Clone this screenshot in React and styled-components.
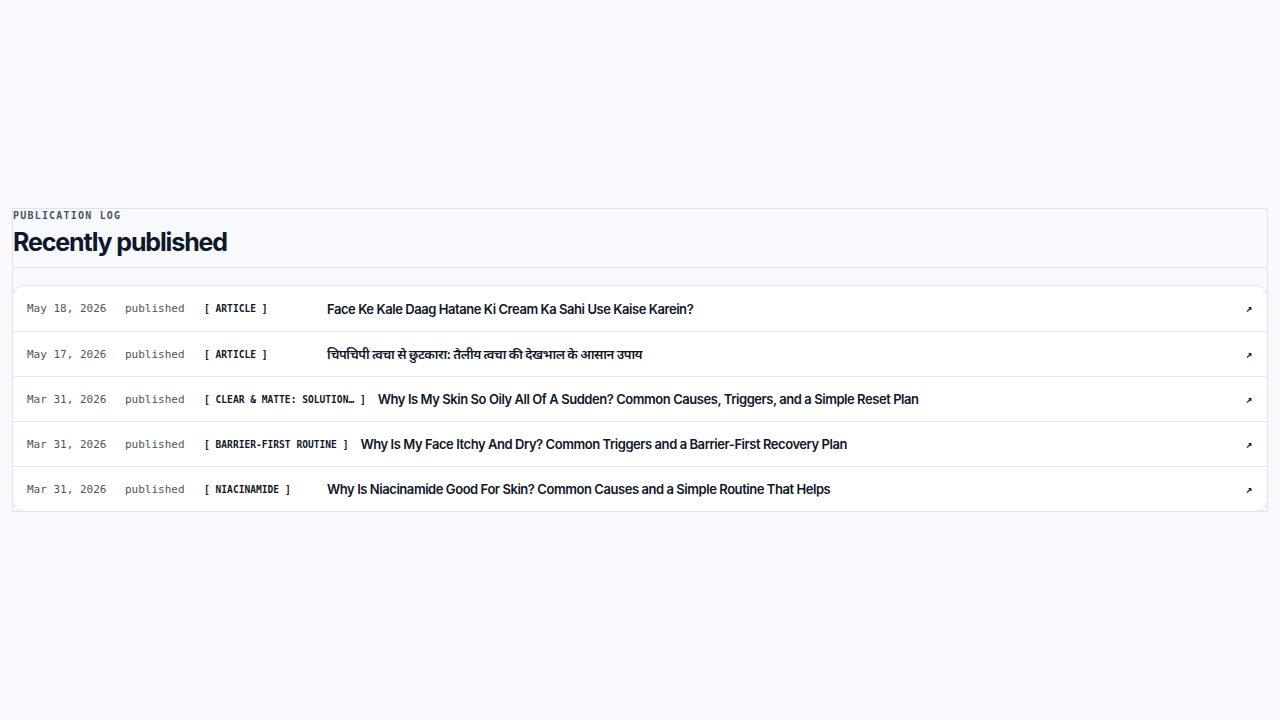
import styled, { createGlobalStyle } from "styled-components";

const GlobalStyle = createGlobalStyle`
  * { box-sizing: border-box; }
  body {
    margin: 0;
    background: #f7f9fc;
    font-family: Inter, "Noto Sans", "Noto Sans Devanagari", sans-serif;
    color: #0f172a;
  }
`;

const Page = styled.main`
  min-height: 100vh;
  display: flex;
  flex-direction: column;
  justify-content: center;
  padding: 0 12px;
`;

const Log = styled.section`
  border: 1px solid #dfe4ea;
`;

const Header = styled.header`
  border-bottom: 1px solid #dfe4ea;
  padding-bottom: 7px;
`;

const Eyebrow = styled.div`
  font-family: "DejaVu Sans Mono", "Liberation Mono", monospace;
  font-size: 10px;
  font-weight: 700;
  letter-spacing: 0.12em;
  color: #475569;
  line-height: 13px;
`;

const Title = styled.h2`
  margin: 2px 0 0;
  font-family: Inter, sans-serif;
  font-size: 25px;
  font-weight: 700;
  letter-spacing: -0.045em;
  line-height: 36px;
  color: #0f172a;
`;

const List = styled.ol`
  list-style: none;
  margin: 17px -1px -1px;
  padding: 0;
  background: #fff;
  border: 1px solid #dfe4ea;
  border-radius: 12px;
  overflow: hidden;
`;

const Row = styled.li`
  display: flex;
  align-items: center;
  height: 45px;
  padding: 0 14px;
  gap: 12px;
  & + & {
    border-top: 1px solid #e4e8ed;
  }
`;

const Mono = styled.span`
  font-family: "DejaVu Sans Mono", "Liberation Mono", monospace;
  font-size: 11px;
  color: #4b5563;
  width: ${(p) => p.$w}px;
  flex: none;
`;

const Tag = styled.span`
  font-family: "DejaVu Sans Mono", "Liberation Mono", monospace;
  font-size: 9.6px;
  font-weight: 700;
  color: #111827;
  min-width: 111px;
  flex: none;
  white-space: nowrap;
`;

const Headline = styled.a`
  flex: 1;
  font-family: Inter, "Noto Sans", "Noto Sans Devanagari", sans-serif;
  font-size: 13px;
  font-weight: 600;
  letter-spacing: -0.034em;
  color: #0f172a;
  text-decoration: none;
  white-space: nowrap;
  overflow: hidden;
  text-overflow: ellipsis;
`;

const Arrow = styled.span`
  font-family: "DejaVu Sans Mono", monospace;
  font-size: 11px;
  font-weight: 700;
  color: #111827;
  flex: none;
  margin-right: 1px;
`;

const posts = [
  { date: "May 18, 2026", tag: "ARTICLE", title: "Face Ke Kale Daag Hatane Ki Cream Ka Sahi Use Kaise Karein?" },
  { date: "May 17, 2026", tag: "ARTICLE", title: "चिपचिपी त्वचा से छुटकारा: तैलीय त्वचा की देखभाल के आसान उपाय" },
  { date: "Mar 31, 2026", tag: "CLEAR & MATTE: SOLUTION…", title: "Why Is My Skin So Oily All Of A Sudden? Common Causes, Triggers, and a Simple Reset Plan" },
  { date: "Mar 31, 2026", tag: "BARRIER-FIRST ROUTINE", title: "Why Is My Face Itchy And Dry? Common Triggers and a Barrier-First Recovery Plan" },
  { date: "Mar 31, 2026", tag: "NIACINAMIDE", title: "Why Is Niacinamide Good For Skin? Common Causes and a Simple Routine That Helps" },
];

export default function App() {
  return (
    <>
      <GlobalStyle />
      <Page>
        <Log>
          <Header>
            <Eyebrow>PUBLICATION LOG</Eyebrow>
            <Title>Recently published</Title>
          </Header>
          <List>
            {posts.map((p, i) => (
              <Row key={i}>
                <Mono $w={86}>{p.date}</Mono>
                <Mono $w={67}>published</Mono>
                <Tag>[ {p.tag} ]</Tag>
                <Headline href="#">{p.title}</Headline>
                <Arrow>↗</Arrow>
              </Row>
            ))}
          </List>
        </Log>
      </Page>
    </>
  );
}
